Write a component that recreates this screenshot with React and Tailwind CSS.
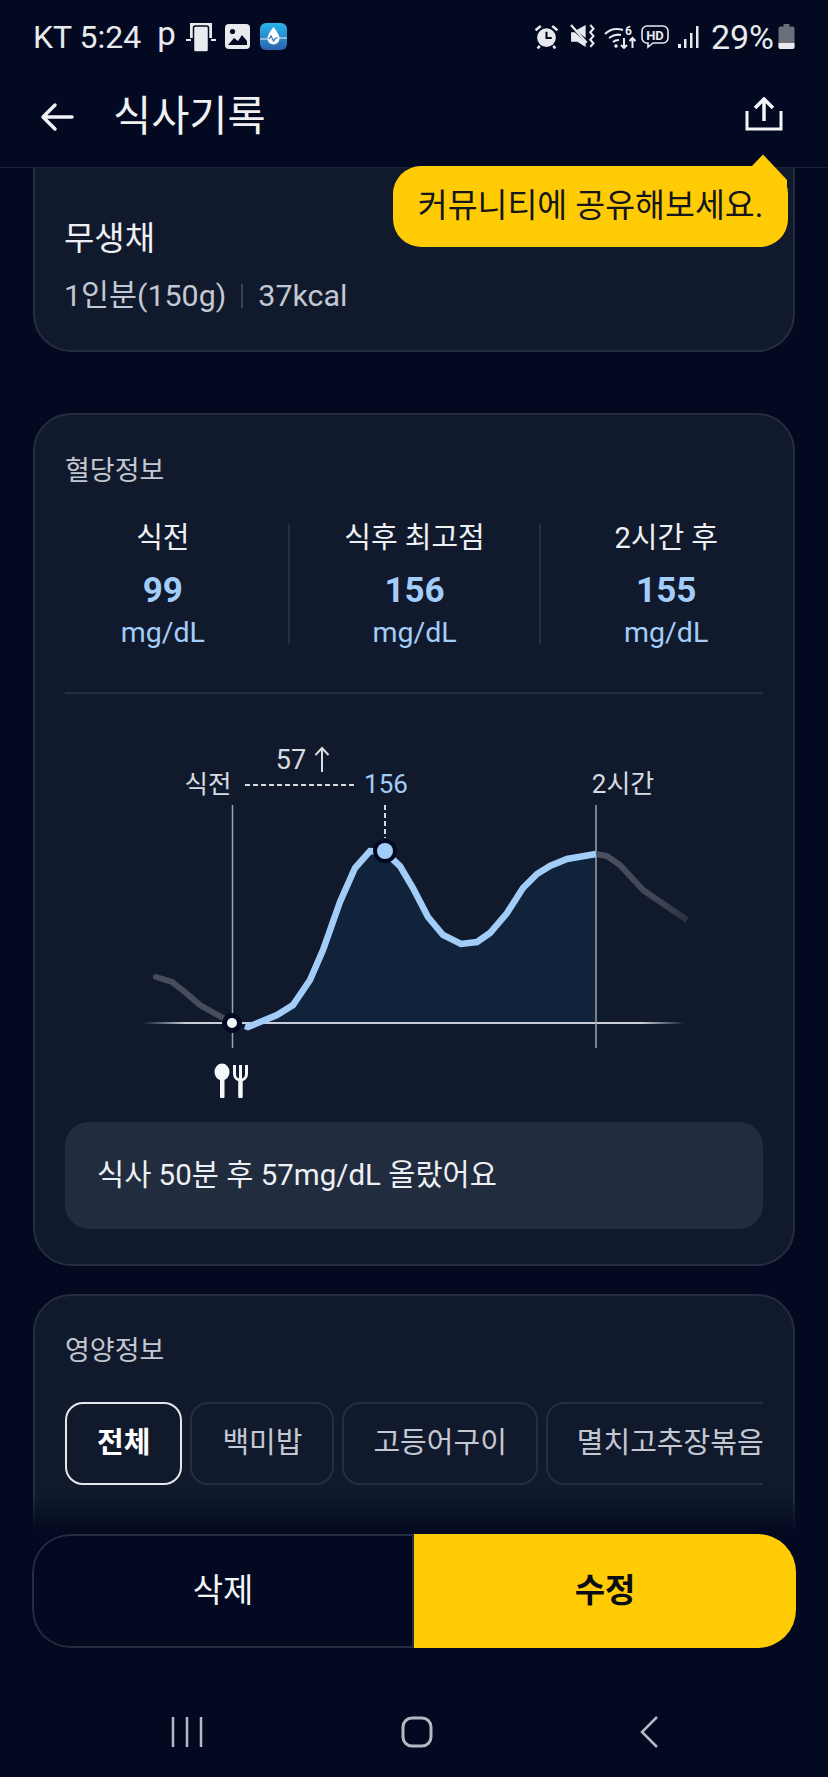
const stats = [
  { label: '식전', value: '99' },
  { label: '식후 최고점', value: '156' },
  { label: '2시간 후', value: '155' },
];

const tabs = [
  { name: '전체', className: 'px-[30px] border-[#e3e6eb] font-bold text-white' },
  { name: '백미밥', className: 'px-[30px] border-[#252d3f] text-[#c3c8d2]' },
  { name: '고등어구이', className: 'px-[29px] border-[#252d3f] text-[#c3c8d2]' },
  { name: '멸치고추장볶음', className: 'px-[29px] border-[#252d3f] text-[#c3c8d2]' },
];

const grayLeft = 'M156 977 L172 982 L186 993 L200 1005 L223 1018 L232 1023';
const blueLine =
  'M245 1026 L248 1027 L277 1015 L293 1005 L310 980 L323 950 L340 902 L355 868 L370 851 L385 852 L400 866 L413 888 L428 917 L443 935 L461 944 L477 942 L490 933 L507 913 L523 888 L537 874 L550 866 L567 859 L596 854';
const grayRight = 'M596 854 L607 856 L620 865 L643 890 L687 920';

function StatusIcons() {
  return (
    <div className="flex items-center">
      {/* alarm */}
      <svg width="25" height="25" viewBox="0 0 24 24" className="mr-[11px]">
        <circle cx="12" cy="13" r="9" fill="#e8eaef" />
        <path d="M12 7.500V13.500h5" stroke="#020920" strokeWidth="2" fill="none" />
        <path d="M1.500 6l5-4M22.500 6l-5-4M5.500 21l-2 2.500M18.500 21l2 2.500" stroke="#e8eaef" strokeWidth="2.400" />
      </svg>
      {/* mute + vibrate */}
      <svg width="25" height="25" viewBox="0 0 24 24" className="mr-[9px]">
        <path d="M1 8h3.500L15 17.500V22l-8-5H1z" fill="#e8eaef" />
        <path d="M6 6l9-5v12.500z" fill="#e8eaef" />
        <path d="M1 1l15 17" stroke="#e8eaef" strokeWidth="2.200" />
        <path d="M19.500 1l3 3.500-3 3.500 3 3.500-3 3.500 3 3.500-3 3.500" stroke="#e8eaef" strokeWidth="2" fill="none" />
      </svg>
      {/* wifi */}
      <svg width="32" height="24" viewBox="0 0 32 24" className="mr-[5px]">
        <path d="M1 9c5-5 12-6 18-4M5 13c4-3 8-4 12-3M9 17c2-2 4-2 6-2" stroke="#e8eaef" strokeWidth="2" fill="none" />
        <circle cx="12" cy="21" r="1.800" fill="#e8eaef" />
        <path d="M20 13v10M17 20l3 3 3-3M28.500 23V13M25.500 16l3-3 3 3" stroke="#e8eaef" strokeWidth="2" fill="none" />
        <text x="21" y="10" fontSize="12" fontWeight="700" fill="#e8eaef" fontFamily="Roboto, sans-serif">6</text>
      </svg>
      {/* HD */}
      <svg width="28" height="24" viewBox="0 0 28 24" className="mr-[9px]">
        <path d="M6 1h16a5 5 0 015 5v7a5 5 0 01-5 5H12l-5 4v-4H6a5 5 0 01-5-5V6a5 5 0 015-5z" stroke="#e8eaef" strokeWidth="1.600" fill="none" />
        <text x="14" y="14.500" textAnchor="middle" fontSize="13" fontWeight="700" fill="#e8eaef" fontFamily="Roboto, sans-serif">HD</text>
      </svg>
      {/* signal */}
      <svg width="21" height="24" viewBox="0 0 21 24" className="mr-[12px]">
        <rect x="0" y="19" width="3" height="4" fill="#e8eaef" />
        <rect x="6" y="14" width="2.500" height="9" fill="#e8eaef" />
        <rect x="12" y="8" width="2.500" height="15" fill="#e8eaef" />
        <rect x="18" y="1" width="2.500" height="22" fill="#e8eaef" />
      </svg>
      <span className="text-[34px] leading-none text-[#e8eaef]">29%</span>
      <svg width="17" height="25" viewBox="0 0 17 25" className="ml-[4px]">
        <path d="M5.500 0h6v2.500h3a2 2 0 012 2V23a2 2 0 01-2 2h-12a2 2 0 01-2-2V4.500a2 2 0 012-2h3z" fill="#6b6f7c" />
        <path d="M.5 19h16v4a2 2 0 01-2 2h-12a2 2 0 01-2-2z" fill="#e8eaef" />
      </svg>
    </div>
  );
}

function GlucoseChart() {
  return (
    <svg viewBox="130 720 570 390" width="570" height="390" className="block">
      <defs>
        <linearGradient id="base" x1="143" x2="685" y1="0" y2="0" gradientUnits="userSpaceOnUse">
          <stop offset="0" stopColor="#c9ced8" stopOpacity="0" />
          <stop offset="0.08" stopColor="#c9ced8" />
          <stop offset="0.92" stopColor="#c9ced8" />
          <stop offset="1" stopColor="#c9ced8" stopOpacity="0" />
        </linearGradient>
        <linearGradient id="fadeRight" x1="596" x2="687" y1="0" y2="0" gradientUnits="userSpaceOnUse">
          <stop offset="0" stopColor="#4b5160" />
          <stop offset="0.7" stopColor="#3f4555" />
          <stop offset="1" stopColor="#2b3242" />
        </linearGradient>
      </defs>

      <path d={`${blueLine} L596 1023 L245 1023 Z`} fill="#11233b" />
      <path d="M143 1023H685" stroke="url(#base)" strokeWidth="2" />
      <path d="M232.500 805V1048M596 805V1048" stroke="#9ba1ad" strokeWidth="1.500" />
      <path d="M245 785H355" stroke="#d7dbe2" strokeWidth="2" strokeDasharray="5 3" />
      <path d="M385 805V838" stroke="#d7dbe2" strokeWidth="2" strokeDasharray="5 3" />

      <path d={grayLeft} stroke="#474d5c" strokeWidth="6" fill="none" strokeLinecap="round" />
      <path d={grayRight} stroke="url(#fadeRight)" strokeWidth="6" fill="none" />
      <path d={blueLine} stroke="#a3cdf9" strokeWidth="6.500" fill="none" />

      <circle cx="385" cy="851" r="12" fill="#020920" />
      <circle cx="385" cy="851" r="8" fill="#a3cdf9" />
      <circle cx="232" cy="1023" r="10" fill="#020920" />
      <circle cx="232" cy="1023" r="5" fill="#f4f5f7" />

      <g fontFamily="Roboto, 'Noto Sans CJK KR', sans-serif">
        <text x="291" y="769" textAnchor="middle" fontSize="27" fill="#d7dbe2">57</text>
        <text x="208" y="793" textAnchor="middle" fontSize="25.500" fill="#d7dbe2">식전</text>
        <text x="386" y="793" textAnchor="middle" fontSize="26" fill="#a3cdf9">156</text>
        <text x="623" y="793" textAnchor="middle" fontSize="26" fill="#d7dbe2">2시간</text>
      </g>
      <path d="M322 772V748M315.500 755l6.500-7 6.500 7" stroke="#d7dbe2" strokeWidth="2" fill="none" />

      {/* spoon and fork */}
      <ellipse cx="222" cy="1072" rx="7.500" ry="8.500" fill="#f6f7f9" />
      <rect x="220" y="1076" width="4.500" height="22" rx="1" fill="#f6f7f9" />
      <path d="M234.500 1065v9c0 4 3 6 6 6s6-2 6-6v-9M240.500 1065V1080" stroke="#f6f7f9" strokeWidth="3" fill="none" />
      <rect x="238.200" y="1078" width="4.500" height="20" rx="1" fill="#f6f7f9" />
    </svg>
  );
}

export default function App() {
  return (
    <div className="relative h-[1777px] w-[828px] overflow-hidden bg-[#020920] text-white [font-family:Roboto,'Noto_Sans_CJK_KR',sans-serif]">
      {/* status bar */}
      <div className="relative z-20 flex h-[72px] items-center justify-between bg-[#020920] pl-[33px] pr-[33px] pt-[1px]">
        <div className="flex items-center text-[#e8eaef]">
          <span className="text-[32px] leading-none">KT 5:24</span>
          <span className="ml-[16px] pb-[6px] text-[33px] leading-none">p</span>
          <svg width="30" height="30" viewBox="0 0 30 30" className="ml-[10px]">
            <path d="M4 1h22v15h-3V4H7v12H4z" fill="#e8eaef" />
            <path d="M0 17h5v2H0zM25 17h5v2h-5z" fill="#e8eaef" />
            <rect x="7.500" y="4" width="15" height="26" rx="2" fill="#e8eaef" stroke="#020920" strokeWidth="1.500" />
          </svg>
          <svg width="25" height="25" viewBox="0 0 25 25" className="ml-[9px]">
            <rect width="25" height="25" rx="4" fill="#e8eaef" />
            <circle cx="7.500" cy="7.500" r="2.600" fill="#020920" />
            <path d="M3 21l6-7 4 3 4-6 5 6v4z" fill="#020920" />
          </svg>
          <svg width="27" height="27" viewBox="0 0 27 27" className="ml-[10px]">
            <defs>
              <linearGradient id="app" x1="0" x2="0" y1="0" y2="1">
                <stop offset="0" stopColor="#2ab5ec" />
                <stop offset="1" stopColor="#2b63ab" />
              </linearGradient>
            </defs>
            <rect width="27" height="27" rx="6" fill="url(#app)" />
            <path d="M13.500 4c3 4 6 8 6 11.500a6 6 0 01-12 0C7.500 12 10.500 8 13.500 4z" fill="#fff" />
            <path d="M0 16h9l2-3 2.500 5 2-3h11.500" stroke="#e8f3fb" strokeWidth="1.100" fill="none" />
            <path d="M9 16l2-3 2.500 5 2-3h2" stroke="#2b73b8" strokeWidth="1.200" fill="none" />
          </svg>
        </div>
        <StatusIcons />
      </div>

      {/* app bar */}
      <div className="relative z-20 flex h-[96px] items-center border-b border-[#1a2233] bg-[#020920] pb-[5px] pl-[40px] pr-[45px]">
        <svg width="34" height="30" viewBox="0 0 34 30">
          <path d="M3 15H32M15 3L3 15l12 12" stroke="#f2f3f6" strokeWidth="3.500" strokeLinecap="round" strokeLinejoin="round" fill="none" />
        </svg>
        <h1 className="ml-[39px] text-[41.500px] leading-none text-[#eef0f4]">식사기록</h1>
        <svg width="38" height="34" viewBox="0 0 38 34" className="-mt-[6px] ml-auto">
          <path d="M19 24V3M10 11l9-9 9 9" stroke="#f4f5f7" strokeWidth="3.500" fill="none" />
          <path d="M2 14v18h34V14" stroke="#f4f5f7" strokeWidth="3" fill="none" />
        </svg>
      </div>

      {/* tooltip */}
      <div className="absolute left-[393px] top-[166px] z-30 flex h-[81px] w-[395px] items-center justify-center rounded-[28px] bg-[#ffcb05] text-[32.500px] leading-none text-[#14161c]">
        <svg width="40" height="32" viewBox="0 0 40 32" className="absolute left-[355px] top-[-12px]">
          <path d="M3 13L14.500 1h1L39 26V32H3z" fill="#ffcb05" />
        </svg>
        <span className="relative">커뮤니티에 공유해보세요.</span>
      </div>

      {/* scrolling content */}
      <div className="flex flex-col px-[33px]">
        <div className="-mt-[40px] h-[224px] rounded-[38px] border-2 border-[#252d3f] bg-[#111a2c] px-[29px] pt-[92px]">
          <div className="text-[33px] leading-none text-[#eef0f4]">무생채</div>
          <div className="mt-[26px] flex items-center text-[30.400px] leading-none text-[#c3c8d2]">
            <span>1인분(150g)</span>
            <span className="mx-[15px] h-[24px] w-[2px] bg-[#3a4252]" />
            <span>37kcal</span>
          </div>
        </div>

        <div className="mt-[61px] h-[853px] rounded-[38px] border-2 border-[#252d3f] bg-[#111a2c] px-[30px] pt-[41px]">
          <div className="text-[27px] leading-[30px] text-[#c3c8d2]">혈당정보</div>
          <div className="-ml-[27px] -mr-[28px] mt-[38px] flex h-[120px]">
            {stats.map((s, i) => (
              <div key={s.label} className={`flex flex-1 flex-col items-center ${i < 2 ? 'border-r-2 border-[#252d3f]' : ''}`}>
                <span className="text-[29px] leading-[28px] text-[#eef0f4]">{s.label}</span>
                <span className="mt-[22px] text-[35px] font-bold leading-[34px] text-[#a3cdf9]">{s.value}</span>
                <span className="mt-[9px] text-[28.500px] leading-[32px] text-[#a3cdf9]">mg/dL</span>
              </div>
            ))}
          </div>
          <div className="mt-[48px] h-[2px] bg-[#252d3f]" />
          <div className="ml-[65px] mt-[26px]">
            <GlucoseChart />
          </div>
          <div className="mt-[12px] flex h-[107px] items-center rounded-[24px] bg-[#212c3e] pl-[32px] text-[29.500px] text-[#eef0f4]">
            식사 50분 후 57mg/dL 올랐어요
          </div>
        </div>

        <div className="mt-[28px] h-[500px] rounded-[38px] border-2 border-[#252d3f] bg-[#111a2c] px-[30px] pt-[40px]">
          <div className="text-[27px] leading-[30px] text-[#c3c8d2]">영양정보</div>
          <div className="mt-[36px] flex gap-[8px] overflow-hidden">
            {tabs.map((t) => (
              <div
                key={t.name}
                className={`flex h-[83px] shrink-0 items-center whitespace-nowrap rounded-[18px] border-2 text-[29px] ${t.className}`}
              >
                {t.name}
              </div>
            ))}
          </div>
        </div>
      </div>

      {/* bottom actions */}
      <div className="absolute inset-x-0 bottom-0 z-10">
        <div className="h-[41px] bg-gradient-to-b from-[#111a2c00] to-[#020920]" />
        <div className="h-[243px] bg-[#020920] px-[32px]">
          <div className="flex h-[114px] overflow-hidden rounded-[38px]">
            <div className="flex flex-1 items-center justify-center rounded-l-[38px] border-2 border-r-0 border-[#252d3f] text-[33px] text-[#f4f5f7]">삭제</div>
            <div className="flex w-[384px] items-center justify-center border-l-2 border-[#252d3f] bg-[#ffcb05] text-[33px] font-bold text-[#0b0d14]">수정</div>
          </div>
          <div className="mt-[67px] flex items-center">
            <svg width="32" height="32" viewBox="0 0 32 32" className="ml-[139px]">
              <path d="M2 1v30M16 1v30M30 1v30" stroke="#b5b9c3" strokeWidth="2.500" />
            </svg>
            <svg width="32" height="32" viewBox="0 0 32 32" className="ml-[198px]">
              <rect x="2" y="2" width="28" height="28" rx="9" stroke="#b5b9c3" strokeWidth="3" fill="none" />
            </svg>
            <svg width="20" height="34" viewBox="0 0 20 34" className="ml-[206px]">
              <path d="M18 2L3 17l15 15" stroke="#b5b9c3" strokeWidth="2.500" fill="none" />
            </svg>
          </div>
        </div>
      </div>
    </div>
  );
}
